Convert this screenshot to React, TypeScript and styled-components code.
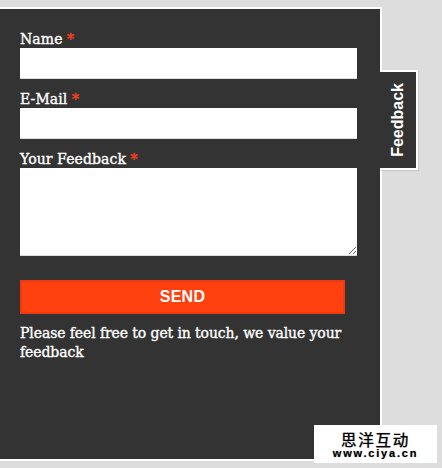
import React from 'react';
import styled, { createGlobalStyle } from 'styled-components';

const GlobalStyle = createGlobalStyle`
  html, body {
    margin: 0;
    padding: 0;
    background: #dddddd;
  }
`;

const App: React.FC = () => {
  return (
    <Page>
      <GlobalStyle />
      <Panel>
        <Form>
          <Field>
            <Label>Name <Star>*</Star></Label>
            <TextInput type="text" />
          </Field>
          <Field>
            <Label>E-Mail <Star>*</Star></Label>
            <TextInput type="text" />
          </Field>
          <Field>
            <Label>Your Feedback <Star>*</Star></Label>
            <TextArea />
          </Field>
          <Send type="button">SEND</Send>
          <Note>Please feel free to get in touch, we value your feedback</Note>
        </Form>
        <Tab>
          <TabText>Feedback</TabText>
        </Tab>
      </Panel>
      <Watermark>
        <WatermarkTitle>思洋互动</WatermarkTitle>
        <WatermarkUrl>www.ciya.cn</WatermarkUrl>
      </Watermark>
    </Page>
  );
};

const Page = styled.div`
  position: relative;
  width: 442px;
  height: 468px;
  padding-top: 7px;
  box-sizing: border-box;
  overflow: hidden;
  background: #dddddd;
`;

const Panel = styled.div`
  position: relative;
  width: 382px;
  height: 454px;
  box-sizing: border-box;
  background: #333333;
  border: solid 2px #fff;
  border-left: 0;
`;

const Form = styled.form`
  display: flex;
  flex-direction: column;
  padding: 20px 0 0 20px;
  font-family: 'DejaVu Serif', Georgia, serif;
`;

const Field = styled.div`
  display: flex;
  flex-direction: column;
  margin-bottom: 10px;
`;

const Label = styled.label`
  height: 19px;
  font-size: 14px;
  line-height: 20px;
  letter-spacing: 0.1px;
  color: #fff;
  -webkit-text-stroke: 0.35px #fff;
`;

const Star = styled.span`
  color: #f0401a;
  -webkit-text-stroke: 0.5px #f0401a;
`;

const TextInput = styled.input`
  width: 337px;
  height: 31px;
  box-sizing: border-box;
  border: 0;
  border-bottom: solid 1px #ddd;
  background: #fff;
  padding: 0;
  margin: 0;
  display: block;
`;

const TextArea = styled.textarea`
  width: 337px;
  height: 88px;
  box-sizing: border-box;
  border: 0;
  border-bottom: solid 1px #ddd;
  background: #fff;
  padding: 0;
  margin: 0;
  display: block;
`;

const Send = styled.button`
  width: 325px;
  height: 34px;
  margin-top: 14px;
  padding: 0;
  box-sizing: border-box;
  background: #ff400f;
  border: solid 2px #ee3a12;
  color: #fff;
  font-family: 'Liberation Sans', Arial, sans-serif;
  font-size: 16px;
  font-weight: bold;
  letter-spacing: 0.3px;
`;

const Note = styled.p`
  width: 335px;
  margin: 10px 0 0;
  font-size: 14px;
  line-height: 19px;
  letter-spacing: -0.1px;
  color: #fff;
  -webkit-text-stroke: 0.35px #fff;
`;

const Tab = styled.div`
  position: absolute;
  left: 380px;
  top: 61px;
  width: 38px;
  height: 100px;
  box-sizing: border-box;
  display: flex;
  align-items: center;
  justify-content: center;
  background: #333333;
  border: solid 2px #fff;
  border-left: 0;
  box-shadow: 1px 1px 1px #ccc;
`;

const TabText = styled.span`
  writing-mode: vertical-rl;
  transform: rotate(180deg);
  font-family: 'Liberation Sans', Arial, sans-serif;
  font-size: 16px;
  font-weight: bold;
  color: #fff;
`;

const Watermark = styled.div`
  position: absolute;
  left: 314px;
  top: 425px;
  width: 123px;
  height: 38px;
  display: flex;
  flex-direction: column;
  align-items: center;
  background: #fff;
  padding-top: 6px;
  box-sizing: border-box;
  color: #000;
`;

const WatermarkTitle = styled.div`
  font-family: 'Noto Sans CJK SC', sans-serif;
  font-size: 15.5px;
  line-height: 17px;
  letter-spacing: 1.7px;
  -webkit-text-stroke: 0.2px #000;
  text-shadow: 0 0 1px #777;
`;

const WatermarkUrl = styled.div`
  font-family: 'Liberation Sans', Arial, sans-serif;
  font-size: 11px;
  line-height: 11px;
  font-weight: bold;
  letter-spacing: 1.8px;
  white-space: nowrap;
  text-shadow: 0 0 1px #777;
`;

export default App;
